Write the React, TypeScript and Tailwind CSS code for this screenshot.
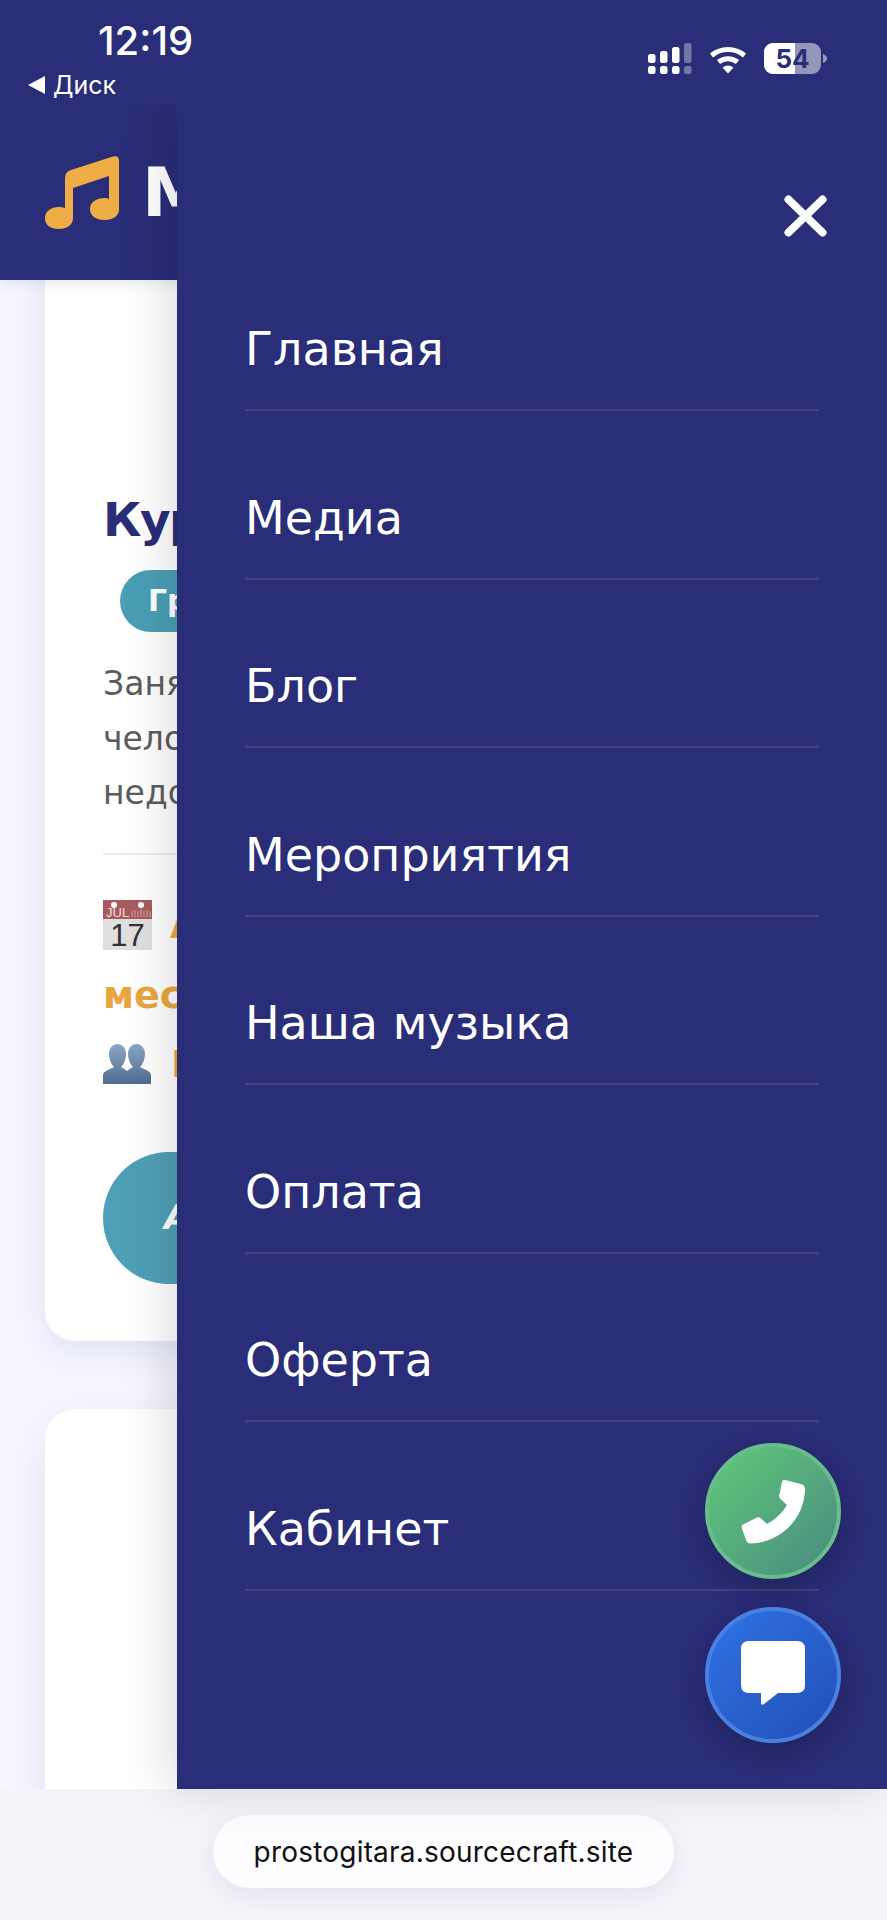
const NAVY = "#2a2d77";
const items = ["Главная", "Медиа", "Блог", "Мероприятия", "Наша музыка", "Оплата", "Оферта", "Кабинет"];

function Signal() {
  const tops = [[0, 11, 9], [12, 8, 12], [24, 4, 16], [36, 0, 20]];
  return (
    <svg width="44" height="31" viewBox="0 0 44 31" fill="white">
      {tops.map(([x, y, h], i) => (
        <g key={i} opacity={i === 3 ? 0.35 : 1}>
          <rect x={x} y={y} width="7.5" height={h} rx="2.5" />
          <rect x={x} y="23" width="7.5" height="8" rx="2.5" />
        </g>
      ))}
    </svg>
  );
}

function Wifi() {
  return (
    <svg width="38" height="28" viewBox="0 0 38 28" fill="none" stroke="white" strokeWidth="5">
      <path d="M2.5 9.5C12 1.5 26 1.5 35.5 9.5" />
      <path d="M9.5 16C15 11.5 23 11.5 28.5 16" />
      <path d="M13.5 21.5Q19 17.5 24.5 21.5L19 27.5Z" fill="white" stroke="none" />
    </svg>
  );
}

function Battery() {
  return (
    <svg width="63" height="31" viewBox="0 0 63 31">
      <rect x="0" y="0" width="57" height="31" rx="9" fill="white" opacity="0.5" />
      <path d="M9 0H31V31H9A9 9 0 0 1 0 22V9A9 9 0 0 1 9 0Z" fill="white" />
      <path d="M59 11C62 12 63 14 63 15.500C63 17 62 19 59 20Z" fill="white" opacity="0.5" />
      <text x="28.500" y="24.500" textAnchor="middle" fontFamily="Inter, sans-serif" fontWeight="700" fontSize="26" fill={NAVY}>54</text>
    </svg>
  );
}

function Note() {
  return (
    <svg width="75" height="73" viewBox="0 0 75 73" fill="#efac47">
      <path d="M20 22Q20 16 26 14L68 0.500Q74 -1 74 5V53C74 60 68 64 60 64C51 64 45 60 45 53C45 46 51 42 60 42Q62 42 64 43V20L28 32V62C28 69 22 73 14 73C5 73 0 69 0 62C0 55 6 51 14 51Q17 51 20 52Z" />
    </svg>
  );
}

function Calendar() {
  return (
    <svg width="49" height="50" viewBox="0 0 49 50" className="shrink-0">
      <rect width="49" height="50" fill="#dfdfdf" />
      <rect width="49" height="19" fill="#a95c5e" />
      <circle cx="11" cy="5" r="3" fill="white" />
      <circle cx="38" cy="5" r="3" fill="white" />
      <text x="3" y="17" fontFamily="'Liberation Sans', sans-serif" fontSize="13" fill="#f1dcdc">JUL</text>
      <path d="M29 17V11M32 17V10M35 17V11M38 17V9M41 17V11M44 17V10M47 17V11" stroke="#c98c8c" strokeWidth="1.500" />
      <text x="24.500" y="46" textAnchor="middle" fontFamily="'Liberation Sans', sans-serif" fontSize="31" fill="#333">17</text>
    </svg>
  );
}

function People() {
  return (
    <svg width="48" height="40" viewBox="0 0 48 40" className="shrink-0">
      <defs>
        <linearGradient id="pp" x1="0" y1="0" x2="0" y2="1">
          <stop offset="0" stopColor="#8ba6c6" />
          <stop offset="1" stopColor="#4f6d92" />
        </linearGradient>
      </defs>
      <path d="M0 40V31C0 27 8 25 11 23C8 20 6 15 6 10C6 4 10 0 14.500 0C19 0 23 4 23 10C23 15 21 20 18 23C21 25 26 27 28 32V40Z" fill="url(#pp)" />
      <path d="M20 40V32C22 27 27 25 30 23C27 20 25 15 25 10C25 4 29 0 33.500 0C38 0 42 4 42 10C42 15 40 20 37 23C40 25 48 27 48 31V40Z" fill="url(#pp)" />
    </svg>
  );
}

function PhoneIcon() {
  return (
    <svg width="65" height="65" viewBox="0 0 65 65" fill="white">
      <path d="M44 1L60 5Q64.500 6 64 11C63 40 40 63 10 64.500Q6 64.500 5 61L0.800 49Q0 46 3 45L15 39Q18 37.500 20 39.500L26 45C34 41 41 34 46 26L39.500 20Q37.500 18 38.500 15L41 3Q42 0 44 1Z" />
    </svg>
  );
}

function ChatIcon() {
  return (
    <svg width="64" height="64" viewBox="0 0 64 64" fill="white">
      <path d="M8 0H56Q64 0 64 8V44Q64 52 56 52H37L23 63Q20 65 20 61V52H8Q0 52 0 44V8Q0 0 8 0Z" />
    </svg>
  );
}

export default function App() {
  return (
    <div className="relative flex h-[1920px] w-[887px] flex-col overflow-hidden bg-[#f5f6ff] font-['DejaVu_Sans',sans-serif]">
      {/* status bar */}
      <div className="relative z-20 flex h-[105px] shrink-0 justify-between bg-[#2a2d77] pl-[28px] pr-[60px] pt-[20px] font-['Inter',sans-serif] text-white">
        <div className="flex flex-col">
          <span className="ml-[70px] text-[40px] font-medium leading-[42px]">12:19</span>
          <span className="mt-[8px] flex items-center gap-[8px] text-[25px] leading-[30px]">
            <span className="h-0 w-0 border-y-[9px] border-r-[17px] border-y-transparent border-r-white" />
            Диск
          </span>
        </div>
        <div className="flex items-start gap-[17px] pt-[23px]">
          <Signal />
          <div className="pt-[3px]">
            <Wifi />
          </div>
          <Battery />
        </div>
      </div>

      {/* site header */}
      <div className="relative z-0 flex h-[175px] shrink-0 items-center gap-[22px] bg-[#2a2d77] pl-[45px] shadow-[0_4px_12px_rgba(0,0,0,0.08)]">
        <Note />
        <span className="text-[68px] font-bold leading-none text-white">Музыка</span>
      </div>

      {/* page */}
      <main className="flex min-h-0 flex-1 flex-col gap-[68px] overflow-hidden bg-[#f5f6ff] px-[45px]">
        <article className="-mt-[60px] shrink-0 rounded-[30px] bg-white pb-[57px] pl-[58px] pr-[58px] pt-[272px] shadow-[0_12px_36px_rgba(42,45,119,0.09)]">
          <h2 className="whitespace-nowrap text-[47px] font-bold leading-[56px] tracking-[-1.5px] text-[#2a2d77]">Курс гитары</h2>
          <span className="ml-[17px] mt-[22px] inline-block rounded-full bg-[#4a9fb5] px-[28px] text-[30px] font-bold leading-[62px] text-white">Группа</span>
          <p className="mt-[25px] text-[33px] leading-[54.500px] text-[#5c5c5c]">
            Занятия<br />человек<br />недорого
          </p>
          <div className="mt-[32px] h-[2px] bg-[#ececec]" />
          <div className="mt-[45px] flex items-center gap-[18px]">
            <Calendar />
            <span className="text-[38px] font-bold leading-[50px] text-[#e9a640]">Август</span>
          </div>
          <div className="mt-[20px] text-[38px] font-bold leading-[50px] text-[#e9a640]">месяц</div>
          <div className="mt-[19px] flex items-center gap-[20px]">
            <People />
            <span className="text-[38px] font-bold leading-[50px] text-[#e9a640]">Группа</span>
          </div>
          <div className="mt-[63px] flex h-[132px] items-center rounded-full bg-[#4f9fb6] pl-[61px] text-[34px] font-bold italic text-white">
            Анкета
          </div>
        </article>
        <article className="h-[500px] shrink-0 rounded-[30px] bg-white shadow-[0_12px_36px_rgba(42,45,119,0.09)]" />
      </main>

      {/* browser url bar */}
      <div className="relative z-10 flex h-[131px] shrink-0 items-start justify-center bg-[#f4f5fb] pt-[26px]">
        <div className="flex h-[73px] w-[461px] items-center justify-center rounded-full bg-[#fdfdff] font-['Inter',sans-serif] text-[28px] tracking-[0.2px] text-[#111] shadow-[0_8px_28px_rgba(30,30,70,0.08)]">
          prostogitara.sourcecraft.site
        </div>
      </div>

      {/* drawer */}
      <nav className="absolute bottom-[131px] left-[177px] right-0 top-[105px] z-10 flex flex-col bg-[#2a2d77] pl-[68px] pr-[68px] shadow-[-10px_0_44px_rgba(0,0,0,0.13)]">
        <div className="flex h-[137.500px] shrink-0 items-end justify-end">
          <svg width="43" height="42" viewBox="0 0 43 42" fill="none" stroke="white" strokeWidth="8" strokeLinecap="round" className="-mr-[8px] mb-[6px]">
            <path d="M4.500 4.500L38.500 37.500M38.500 4.500L4.500 37.500" />
          </svg>
        </div>
        <ul>
          {items.map((t) => (
            <li key={t} className="flex h-[168.570px] items-end border-b-2 border-[#42457f] pb-[24px] text-[46px] leading-[72px] text-white">
              {t}
            </li>
          ))}
        </ul>
      </nav>

      {/* floating buttons */}
      <div className="absolute left-[705px] top-[1443px] z-30 flex flex-col gap-[28px]">
        <button className="flex h-[136px] w-[136px] items-center justify-center rounded-full border-4 border-[#69bd8b] bg-gradient-to-br from-[#5fca78] to-[#4a8a7e] shadow-[0_10px_28px_rgba(0,0,0,0.22)]">
          <PhoneIcon />
        </button>
        <button className="flex h-[136px] w-[136px] items-center justify-center rounded-full border-4 border-[#4a80e4] bg-gradient-to-br from-[#2f73e6] to-[#234fb4] pb-[4px] shadow-[0_10px_28px_rgba(0,0,0,0.22)]">
          <ChatIcon />
        </button>
      </div>
    </div>
  );
}
